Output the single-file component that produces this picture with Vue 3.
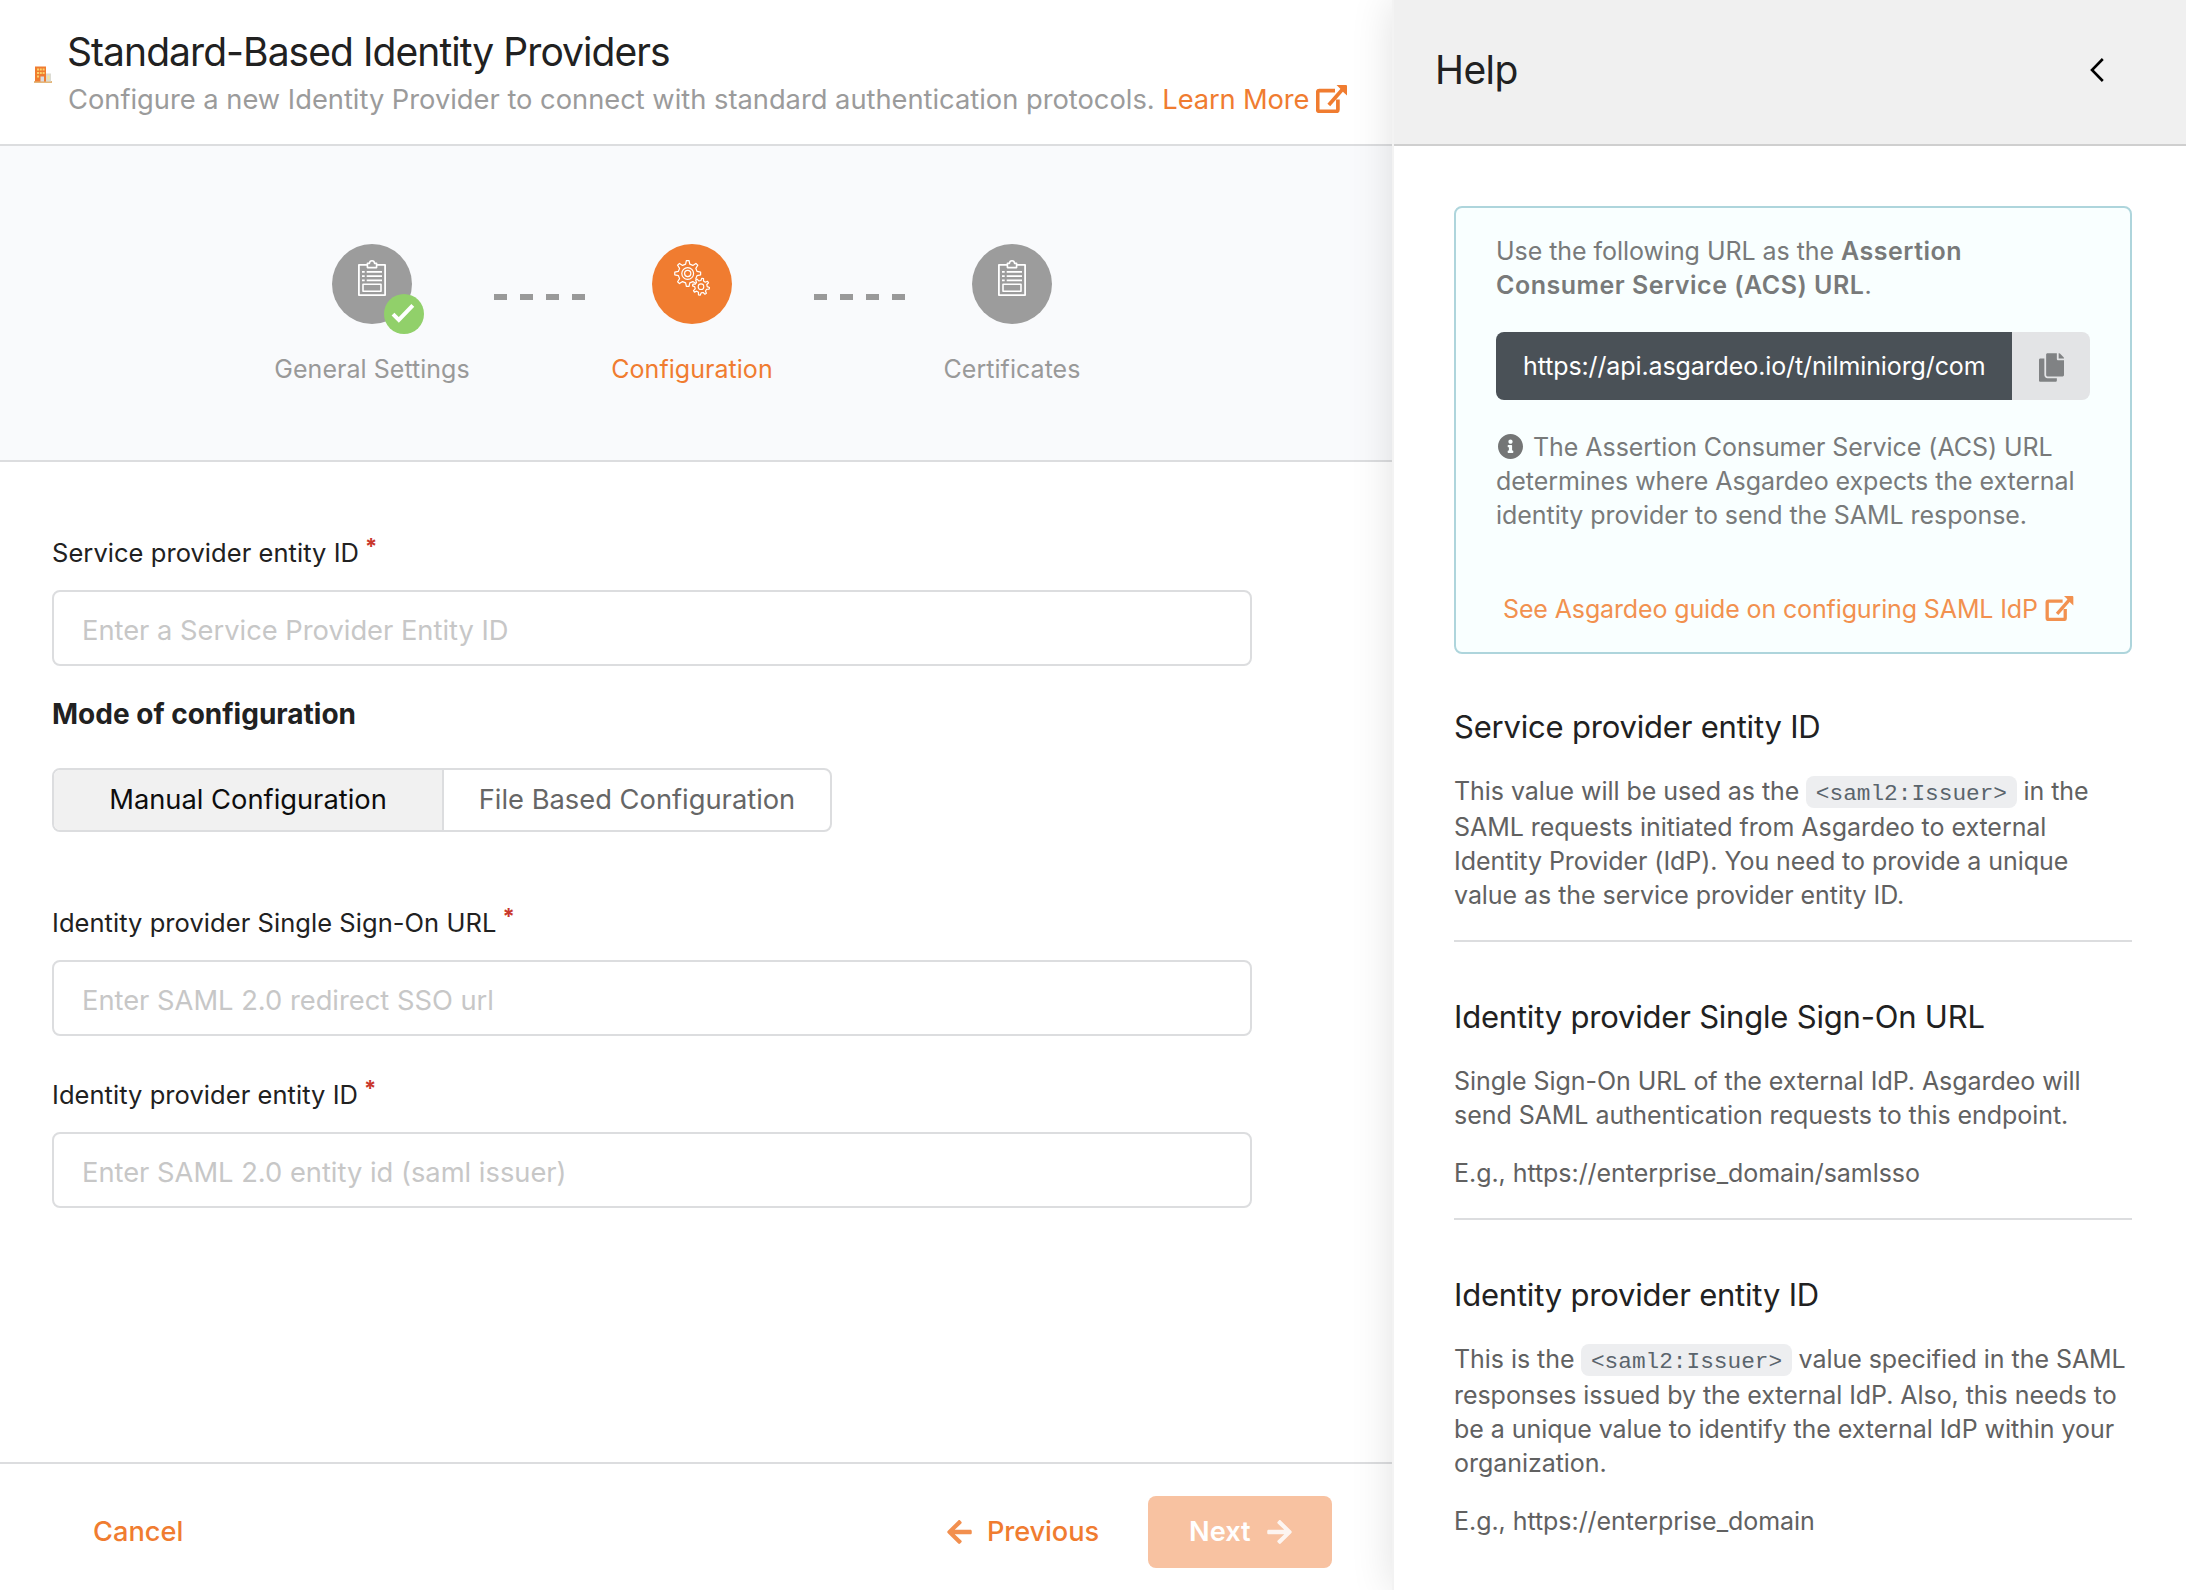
<script setup>
const fields = [
  { label: 'Identity provider Single Sign-On URL', placeholder: 'Enter SAML 2.0 redirect SSO url' },
  { label: 'Identity provider entity ID', placeholder: 'Enter SAML 2.0 entity id (saml issuer)' },
]

const steps = [
  { title: 'General Settings', icon: 'clipboard', done: true },
  { title: 'Configuration', icon: 'gears', active: true },
  { title: 'Certificates', icon: 'clipboard' },
]

// Closed outline of a cog wheel around (cx, cy)
function gear(cx, cy, outer, inner, teeth, phase = 0) {
  const pts = []
  const seg = (Math.PI * 2) / teeth
  for (let i = 0; i < teeth; i++) {
    const a = i * seg + phase - Math.PI / 2
    for (const [o, r] of [[-0.28, inner], [-0.13, outer], [0.13, outer], [0.28, inner]]) {
      const t = a + o * seg
      pts.push(`${(cx + r * Math.cos(t)).toFixed(2)} ${(cy + r * Math.sin(t)).toFixed(2)}`)
    }
  }
  return `M${pts.join('L')}Z`
}
const bigGear = gear(13.7, 13.5, 13, 9.6, 8)
const smallGear = gear(27, 26.7, 8.5, 6.2, 8, 0.2)

const arrow =
  'M257.5 445.1l-22.2 22.2c-9.4 9.4-24.6 9.4-33.9 0L7 273c-9.4-9.4-9.4-24.6 0-33.9L201.4 44.7c9.4-9.4 24.6-9.4 33.9 0l22.2 22.2c9.5 9.5 9.3 25-.4 34.3L136.6 216H424c13.3 0 24 10.7 24 24v32c0 13.3-10.7 24-24 24H136.6l120.5 114.8c9.8 9.3 10 24.8.4 34.3z'
</script>

<template>
  <div class="page">
    <main class="wizard">
      <header class="head">
        <svg class="building" viewBox="0 0 18 17">
          <rect x="0" y="15" width="18" height="2" fill="#e3b77c" />
          <rect x="1" y="0.5" width="11" height="15" fill="#f07c30" />
          <g fill="#fbd06a">
            <rect x="3" y="2.5" width="2" height="2" /><rect x="5.8" y="2.5" width="2" height="2" /><rect x="8.6" y="2.5" width="2" height="2" />
            <rect x="3" y="6" width="2" height="2" /><rect x="5.8" y="6" width="2" height="2" /><rect x="8.6" y="6" width="2" height="2" />
            <rect x="3" y="9.5" width="2" height="2" />
          </g>
          <rect x="6.5" y="10.5" width="3.5" height="5" fill="#d9dde2" />
          <rect x="12" y="7.5" width="5" height="8" fill="#dcdcd4" />
          <rect x="13.5" y="9.5" width="2" height="4" fill="#f5e6a0" />
        </svg>
        <div>
          <h1>Standard-Based Identity Providers</h1>
          <p class="sub">
            Configure a new Identity Provider to connect with standard authentication protocols.
            <a>Learn More<svg class="ext" viewBox="0 0 31 28">
              <path d="M19 5.7H3.2Q1.7 5.7 1.7 7.2V24.8Q1.7 26.3 3.2 26.3H20.4Q21.9 26.3 21.9 24.8V14.5" />
              <path d="M12.8 20 27 3.8" /><path class="solid" d="M20.5 0H30q1 0 1 1V10.5L27.7 7.6 23.8 3.2Z" />
            </svg></a>
          </p>
        </div>
      </header>

      <section class="steps">
        <template v-for="(s, i) in steps" :key="s.title">
          <div v-if="i" class="dash"><i v-for="n in 4" :key="n"></i></div>
          <div class="step" :class="{ active: s.active }">
            <div class="circle">
              <svg v-if="s.icon === 'clipboard'" class="glyph" viewBox="0 0 36 36">
                <path d="M13 4.9H4.9V35.1H31.1V4.9H23" stroke-width="1.8" />
                <path d="M13.4 3.4H15.4Q15.6.8 18 .8T20.6 3.4H22.6V7.6H13.4Z" stroke-width="1.6" />
                <path d="M8 11.8h2.7M12.7 11.8H28M8 16.1h2.7M12.7 16.1H28M8 20.4h2.7M12.7 20.4H28" stroke-width="1.7" />
                <rect x="9" y="24.2" width="18" height="7" stroke-width="1.6" />
              </svg>
              <svg v-else class="glyph" viewBox="0 0 36 36">
                <path :d="bigGear" stroke-width="1.2" />
                <circle cx="13.7" cy="13.5" r="5.9" stroke-width="1.2" />
                <circle cx="13.7" cy="13.5" r="3.1" stroke-width="1.2" />
                <path :d="smallGear" stroke-width="1.2" class="cover" />
                <circle cx="27" cy="26.7" r="2.8" stroke-width="1.1" />
              </svg>
              <span v-if="s.done" class="badge">
                <svg viewBox="0 0 40 40"><path d="M9 20.2 14.8 26 28.8 11.3" /></svg>
              </span>
            </div>
            <div class="name">{{ s.title }}</div>
          </div>
        </template>
      </section>

      <form class="form">
        <label>Service provider entity ID<sup>*</sup></label>
        <input placeholder="Enter a Service Provider Entity ID" />
        <h2>Mode of configuration</h2>
        <div class="toggle">
          <div class="on">Manual Configuration</div>
          <div>File Based Configuration</div>
        </div>
        <div v-for="f in fields" :key="f.label" class="field">
          <label>{{ f.label }}<sup>*</sup></label>
          <input :placeholder="f.placeholder" />
        </div>
      </form>

      <footer class="foot">
        <a class="cancel">Cancel</a>
        <a class="prev"><svg viewBox="0 0 448 512"><path :d="arrow" /></svg>Previous</a>
        <div class="next">Next<svg viewBox="0 0 448 512"><path :d="arrow" /></svg></div>
      </footer>
    </main>

    <aside class="help">
      <header class="help-head">
        <span>Help</span>
        <svg viewBox="0 0 14 24"><path d="M12.8 1 2 12 12.8 23" /></svg>
      </header>
      <div class="help-body">
        <div class="box">
          <p>Use the following URL as the <b>Assertion Consumer Service (ACS) URL</b>.</p>
          <div class="copy">
            <div class="url">https://api.asgardeo.io/t/nilminiorg/com</div>
            <div class="btn">
              <svg viewBox="0 0 448 512"><path d="M320 448v40c0 13.255-10.745 24-24 24H24c-13.255 0-24-10.745-24-24V120c0-13.255 10.745-24 24-24h72v296c0 30.879 25.121 56 56 56h168zm0-344V0H152c-13.255 0-24 10.745-24 24v368c0 13.255 10.745 24 24 24h272c13.255 0 24-10.745 24-24V128H344c-13.2 0-24-10.8-24-24zm120.971-31.029L375.029 7.029A24 24 0 0 0 358.059 0H352v96h96v-6.059a24 24 0 0 0-7.029-16.97z" /></svg>
            </div>
          </div>
          <p><svg class="info" viewBox="8 8 496 496"><path d="M256 8C119.043 8 8 119.083 8 256c0 136.997 111.043 248 248 248s248-111.003 248-248C504 119.083 392.957 8 256 8zm0 110c23.196 0 42 18.804 42 42s-18.804 42-42 42-42-18.804-42-42 18.804-42 42-42zm56 254c0 6.627-5.373 12-12 12h-88c-6.627 0-12-5.373-12-12v-24c0-6.627 5.373-12 12-12h12v-64h-12c-6.627 0-12-5.373-12-12v-24c0-6.627 5.373-12 12-12h64c6.627 0 12 5.373 12 12v100h12c6.627 0 12 5.373 12 12v24z" /></svg>The Assertion Consumer Service (ACS) URL determines where Asgardeo expects the external identity provider to send the SAML response.</p>
          <a class="guide">See Asgardeo guide on configuring SAML IdP<svg class="ext" viewBox="0 0 31 28">
            <path d="M19 5.7H3.2Q1.7 5.7 1.7 7.2V24.8Q1.7 26.3 3.2 26.3H20.4Q21.9 26.3 21.9 24.8V14.5" />
            <path d="M12.8 20 27 3.8" /><path class="solid" d="M20.5 0H30q1 0 1 1V10.5L27.7 7.6 23.8 3.2Z" />
          </svg></a>
        </div>

        <section>
          <h3>Service provider entity ID</h3>
          <p>This value will be used as the <code>&lt;saml2:Issuer&gt;</code> in the SAML requests initiated from Asgardeo to external Identity Provider (IdP). You need to provide a unique value as the service provider entity ID.</p>
        </section>
        <section>
          <h3>Identity provider Single Sign-On URL</h3>
          <p>Single Sign-On URL of the external IdP. Asgardeo will send SAML authentication requests to this endpoint.</p>
          <p>E.g., https://enterprise_domain/samlsso</p>
        </section>
        <section>
          <h3>Identity provider entity ID</h3>
          <p>This is the <code>&lt;saml2:Issuer&gt;</code> value specified in the SAML responses issued by the external IdP. Also, this needs to be a unique value to identify the external IdP within your organization.</p>
          <p>E.g., https://enterprise_domain</p>
        </section>
      </div>
    </aside>
  </div>
</template>

<style>
body {
  margin: 0;
  background: #fff;
}
</style>

<style scoped>
* {
  box-sizing: border-box;
}
.page {
  display: flex;
  width: 2186px;
  height: 1590px;
  overflow: hidden;
  font-family: Inter, 'Liberation Sans', sans-serif;
  color: #212121;
}
h1,
h2,
h3,
p {
  margin: 0;
}

/* Wizard column */
.wizard {
  display: flex;
  flex-direction: column;
  width: 1392px;
}
.head {
  display: flex;
  height: 146px;
  padding: 27px 0 0 34px;
  border-bottom: 2px solid #dcdddf;
}
.building {
  flex: none;
  width: 18px;
  height: 17px;
  margin: 39px 15px 0 0;
}
h1 {
  font-size: 39px;
  font-weight: 400;
  line-height: 50px;
  letter-spacing: -0.94px;
}
.sub {
  margin-top: 5px;
  padding-left: 1px;
  font-size: 27.3px;
  line-height: 36px;
  letter-spacing: -0.01px;
  color: #9b9b9b;
  white-space: nowrap;
}
.sub a {
  letter-spacing: -0.12px;
}
.sub a,
.foot a {
  color: #f07c30;
}
.ext {
  width: 31px;
  height: 28px;
  margin-left: 7px;
  vertical-align: -4px;
  fill: none;
  stroke: currentColor;
  stroke-width: 3.7;
}
.ext .solid {
  fill: currentColor;
  stroke: none;
}
.steps {
  display: flex;
  height: 316px;
  padding: 98px 0 0 272px;
  background: #f9fafc;
  border-bottom: 2px solid #dcdddf;
}
.step {
  display: flex;
  flex-direction: column;
  align-items: center;
  width: 200px;
}
.circle {
  position: relative;
  display: flex;
  justify-content: center;
  width: 80px;
  height: 80px;
  padding-top: 16px;
  border-radius: 50%;
  background: #9c9c9c;
}
.active .circle {
  background: #f07c30;
}
.glyph {
  width: 36px;
  height: 36px;
  fill: none;
  stroke: #fff;
  stroke-linejoin: round;
}
.glyph .cover {
  fill: #f07c30;
}
.badge {
  position: absolute;
  right: -12px;
  bottom: -10px;
  width: 40px;
  height: 40px;
  border-radius: 50%;
  background: #91d06a;
}
.badge svg {
  display: block;
  fill: none;
  stroke: #fff;
  stroke-width: 4;
}
.name {
  margin-top: 28px;
  font-size: 25px;
  line-height: 34px;
  letter-spacing: 0.04px;
  color: #999;
  white-space: nowrap;
}
.active .name {
  color: #f07c30;
}
.dash {
  display: flex;
  gap: 13px;
  width: 120px;
  padding: 50px 0 0 21.5px;
}
.dash i {
  width: 13px;
  height: 6px;
  background: #999;
}

.form {
  flex: 1;
  width: 1252px;
  padding: 74px 0 0 52px;
}
label {
  display: block;
  height: 34px;
  font-size: 25.5px;
  line-height: 34px;
  letter-spacing: 0.05px;
}
sup {
  margin-left: 6px;
  font-size: 22px;
  font-weight: 700;
  line-height: 0;
  vertical-align: 8px;
  color: #c9372c;
}
input {
  display: block;
  width: 1200px;
  height: 76px;
  margin-top: 20px;
  padding: 4px 28px 0;
  border: 2px solid #dcdddf;
  border-radius: 8px;
  background: #fff;
  font: 27.3px Inter, sans-serif;
}
input::placeholder {
  color: #c7c7c7;
}
h2 {
  margin: 30px 0 36px;
  font-size: 28px;
  font-weight: 700;
  line-height: 36px;
}
.toggle {
  display: flex;
  width: 780px;
  height: 64px;
  margin-bottom: 74px;
  border: 2px solid #dcdddf;
  border-radius: 8px;
  overflow: hidden;
  font-size: 27.3px;
  line-height: 60px;
  text-align: center;
  color: #666;
}
.toggle div {
  flex: 1;
}
.toggle .on {
  flex: none;
  width: 390px;
  border-right: 2px solid #dcdddf;
  background: #f1f1f1;
  color: #0d0d0d;
}
.field + .field {
  margin-top: 42px;
}

.foot {
  display: flex;
  height: 128px;
  padding: 32px 60px 0 93px;
  border-top: 2px solid #dcdddf;
  font-size: 27.2px;
  font-weight: 500;
  line-height: 72px;
}
.foot svg {
  width: 25px;
  height: 28px;
  fill: currentColor;
  opacity: 0.85;
}
.prev {
  display: flex;
  align-items: center;
  gap: 15px;
  height: 72px;
  margin: 0 49px 0 auto;
  letter-spacing: -0.1px;
}
.next {
  display: flex;
  align-items: center;
  gap: 16px;
  width: 184px;
  height: 72px;
  padding-left: 41px;
  border-radius: 8px;
  background: #f8c2a1;
  color: #fff;
  font-weight: 600;
}
.next svg {
  transform: scaleX(-1);
}

/* Help panel */
.help {
  position: relative;
  width: 794px;
  border-left: 2px solid #f3f3f3;
  background: #fff;
  box-shadow: 0 0 40px rgba(0, 0, 0, 0.12);
}
.help-head {
  display: flex;
  align-items: center;
  justify-content: space-between;
  height: 146px;
  padding: 0 82px 4px 41px;
  border-bottom: 2px solid #cfcfcf;
  background: #f0f0f0;
  font-size: 39px;
  line-height: 50px;
  letter-spacing: -0.55px;
}
.help-head svg {
  width: 14px;
  height: 24px;
  fill: none;
  stroke: #000;
  stroke-width: 2.6;
}
.help-body {
  padding: 60px 50px 0 60px;
  font-size: 25px;
  line-height: 34px;
  letter-spacing: -0.05px;
  color: #616161;
}
.box {
  width: 678px;
  height: 448px;
  padding: 26px 40px;
  border: 2px solid #aed5dc;
  border-radius: 8px;
  background: #f9ffff;
  color: #787a7a;
}
.box b {
  font-weight: 600;
  letter-spacing: 0.5px;
}
.copy {
  display: flex;
  height: 68px;
  margin: 30px 0;
  border-radius: 8px;
  overflow: hidden;
}
.url {
  width: 516px;
  padding: 0 0 0 27px;
  background: #4a5157;
  color: #fff;
  line-height: 68px;
  letter-spacing: -0.11px;
  white-space: nowrap;
}
.btn {
  display: flex;
  align-items: center;
  justify-content: center;
  flex: 1;
  background: #e3e4e6;
}
.btn svg {
  width: 25px;
  height: 29px;
  margin-top: 3px;
  fill: #808284;
}
.info {
  width: 25px;
  height: 25px;
  margin: 0 10px 0 2px;
  vertical-align: -3px;
  fill: #747676;
}
.guide {
  display: block;
  margin: 60px 0 0 7px;
  color: #f2914f;
  white-space: nowrap;
  letter-spacing: -0.13px;
}
.guide .ext {
  width: 29px;
  height: 25px;
  vertical-align: -3px;
}
.help-body section {
  width: 678px;
  padding-bottom: 28px;
  border-bottom: 2px solid #dcdddf;
}
.help-body section:last-child {
  border-bottom: 0;
}
section > h3 {
  padding-top: 55px;
  font-size: 31px;
  font-weight: 400;
  line-height: 40px;
  letter-spacing: -0.2px;
  color: #212121;
}
.box + section > h3 {
  padding-top: 53px;
}
h3 + p {
  margin-top: 27px;
}
section p + p {
  margin-top: 24px;
}
code {
  display: inline-block;
  height: 32px;
  margin: 0 0 2px;
  padding: 4px 9.5px 0;
  border-radius: 8px;
  background: #edeef0;
  color: #5a646c;
  font: 22.75px/28px 'Liberation Mono', monospace;
  letter-spacing: 0;
}
</style>
